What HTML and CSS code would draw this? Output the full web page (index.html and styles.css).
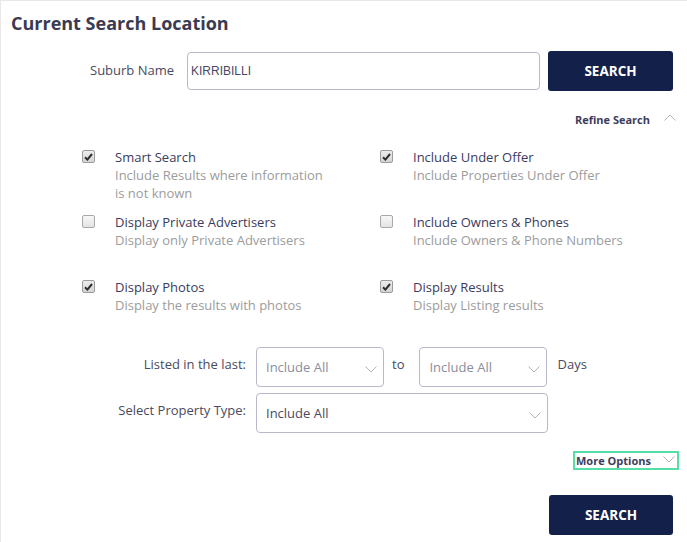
FILE: index.html
```html
<!DOCTYPE html>
<html>
<head>
<meta charset="utf-8">
<link rel="stylesheet" href="styles.css">
</head>
<body>
<div class="card">
  <h1 class="title">Current Search Location</h1>

  <div class="suburb-row">
    <label class="suburb-label">Suburb Name</label>
    <div class="suburb-input">KIRRIBILLI</div>
    <button class="btn">SEARCH</button>
  </div>

  <div class="toggle-row refine">
    <span class="toggle-text">Refine Search</span>
    <svg class="chev" width="12" height="7" viewBox="0 0 12 7"><path d="M0.5 6.5 L6 1 L11.5 6.5" fill="none" stroke="#b3b3b3" stroke-width="1"/></svg>
  </div>

  <div class="options">
    <div class="opt">
      <span class="cb checked"><svg width="9" height="8" viewBox="0 0 9 8"><path d="M1 4.2 L3.4 6.6 L8 1" fill="none" stroke="#2e2e2e" stroke-width="2"/></svg></span>
      <div class="opt-text"><div class="opt-title">Smart Search</div><div class="opt-desc">Include Results where information is not known</div></div>
    </div>
    <div class="opt">
      <span class="cb checked"><svg width="9" height="8" viewBox="0 0 9 8"><path d="M1 4.2 L3.4 6.6 L8 1" fill="none" stroke="#2e2e2e" stroke-width="2"/></svg></span>
      <div class="opt-text"><div class="opt-title">Include Under Offer</div><div class="opt-desc">Include Properties Under Offer</div></div>
    </div>
    <div class="opt">
      <span class="cb"></span>
      <div class="opt-text"><div class="opt-title">Display Private Advertisers</div><div class="opt-desc">Display only Private Advertisers</div></div>
    </div>
    <div class="opt">
      <span class="cb"></span>
      <div class="opt-text"><div class="opt-title">Include Owners &amp; Phones</div><div class="opt-desc">Include Owners &amp; Phone Numbers</div></div>
    </div>
    <div class="opt">
      <span class="cb checked"><svg width="9" height="8" viewBox="0 0 9 8"><path d="M1 4.2 L3.4 6.6 L8 1" fill="none" stroke="#2e2e2e" stroke-width="2"/></svg></span>
      <div class="opt-text"><div class="opt-title">Display Photos</div><div class="opt-desc">Display the results with photos</div></div>
    </div>
    <div class="opt">
      <span class="cb checked"><svg width="9" height="8" viewBox="0 0 9 8"><path d="M1 4.2 L3.4 6.6 L8 1" fill="none" stroke="#2e2e2e" stroke-width="2"/></svg></span>
      <div class="opt-text"><div class="opt-title">Display Results</div><div class="opt-desc">Display Listing results</div></div>
    </div>
  </div>

  <div class="filters">
    <div class="filter-row">
      <label class="filter-label">Listed in the last:</label>
      <div class="select small"><span>Include All</span><svg width="12" height="7" viewBox="0 0 12 7"><path d="M0.5 0.5 L6 6 L11.5 0.5" fill="none" stroke="#b3b3b3" stroke-width="1"/></svg></div>
      <span class="inline-text to">to</span>
      <div class="select small"><span>Include All</span><svg width="12" height="7" viewBox="0 0 12 7"><path d="M0.5 0.5 L6 6 L11.5 0.5" fill="none" stroke="#b3b3b3" stroke-width="1"/></svg></div>
      <span class="inline-text days">Days</span>
    </div>
    <div class="filter-row">
      <label class="filter-label">Select Property Type:</label>
      <div class="select wide"><span class="dark">Include All</span><svg width="12" height="7" viewBox="0 0 12 7"><path d="M0.5 0.5 L6 6 L11.5 0.5" fill="none" stroke="#b3b3b3" stroke-width="1"/></svg></div>
    </div>
  </div>

  <div class="more-wrap">
    <div class="more">
      <span class="toggle-text">More Options</span>
      <svg class="chev" width="12" height="7" viewBox="0 0 12 7"><path d="M0.5 0.5 L6 6 L11.5 0.5" fill="none" stroke="#b3b3b3" stroke-width="1"/></svg>
    </div>
  </div>

  <div class="bottom-row">
    <button class="btn">SEARCH</button>
  </div>
</div>
</body>
</html>
```

FILE: styles.css
```css
html, body {
  margin: 0;
  padding: 0;
  background: #ffffff;
}
body {
  font-family: "Open Sans", sans-serif;
  color: #3d3d5c;
  width: 687px;
  height: 542px;
  overflow: hidden;
}
.card {
  box-sizing: border-box;
  border-top: 1px solid #e8e8e8;
  border-left: 1px solid #e8e8e8;
  padding: 10px 0 0 10px;
  height: 542px;
  overflow: hidden;
}
.title {
  margin: 0;
  font-size: 18px;
  line-height: 24px;
  font-weight: 700;
  color: #3a3a52;
}
.suburb-row {
  display: flex;
  align-items: center;
  margin-top: 16px;
  padding-left: 79px;
}
.suburb-label {
  font-size: 13px;
  line-height: 18px;
  color: #4a4a5e;
  width: 97px;
  margin-top: -3px;
}
.suburb-input {
  box-sizing: border-box;
  width: 353px;
  height: 38px;
  border: 1px solid #b9b9c9;
  border-radius: 4px;
  padding-left: 3px;
  display: flex;
  align-items: center;
  font-family: "Liberation Sans", Arial, sans-serif;
  font-size: 12px;
  color: #4a4a66;
}
.btn {
  box-sizing: border-box;
  width: 125px;
  height: 40px;
  margin-left: 8px;
  border: none;
  border-radius: 3px;
  background: #13214a;
  color: #ffffff;
  font-family: "Open Sans", sans-serif;
  font-weight: 700;
  font-size: 13.5px;
  padding: 0;
}
.toggle-row {
  display: flex;
  justify-content: flex-end;
  align-items: center;
  height: 16px;
}
.refine {
  margin-top: 21px;
  padding-right: 11px;
}
.toggle-text {
  font-size: 11px;
  font-weight: 700;
  color: #3d3d5c;
  line-height: 16px;
}
.chev {
  display: block;
  margin-left: 14px;
}
.refine .chev {
  margin-top: -6px;
}
.options {
  display: grid;
  grid-template-columns: 298px 298px;
  grid-template-rows: 65px 65px auto;
  margin-top: 20px;
  padding-left: 71px;
}
.opt {
  display: flex;
  align-items: flex-start;
}
.cb {
  box-sizing: border-box;
  width: 13px;
  height: 13px;
  margin-top: 2px;
  border: 1px solid #a9a9a9;
  border-radius: 2px;
  background: linear-gradient(#f8f8f8, #e3e3e3);
  display: flex;
  align-items: center;
  justify-content: center;
  flex-shrink: 0;
}
.cb.checked {
  background: linear-gradient(#ececec, #d4d4d4);
  border-color: #9c9c9c;
}
.cb svg {
  display: block;
}
.opt-text {
  margin-left: 20px;
  width: 216px;
  font-size: 13px;
  line-height: 18px;
}
.opt-title {
  color: #3b3b5e;
}
.opt-desc {
  color: #9c9c9c;
}
.filters {
  margin-top: 33px;
  display: flex;
  flex-direction: column;
  gap: 6px;
}
.filter-row {
  display: flex;
  align-items: flex-start;
}
.filter-label {
  width: 235px;
  text-align: right;
  font-size: 13px;
  line-height: 18px;
  padding-top: 8px;
  color: #4a4a5e;
  margin-right: 10px;
}
.select {
  box-sizing: border-box;
  height: 40px;
  border: 1px solid #b9b9c9;
  border-radius: 4px;
  display: flex;
  align-items: center;
  justify-content: space-between;
  padding: 0 6px 0 9px;
  font-size: 13px;
  color: #8a8e9e;
}
.select svg {
  display: block;
  margin-top: 4px;
}
.select .dark {
  color: #4a4a5e;
}
.select.small {
  width: 128px;
}
.select.wide {
  width: 292px;
}
.inline-text {
  font-size: 13px;
  line-height: 18px;
  padding-top: 8px;
  color: #4a4a5e;
}
.to {
  margin: 0 15px 0 8px;
}
.days {
  margin-left: 10px;
}
.more-wrap {
  display: flex;
  justify-content: flex-end;
  margin-top: 18px;
  padding-right: 8px;
}
.more {
  box-sizing: border-box;
  width: 106px;
  height: 19px;
  border: 2px solid #55dfa6;
  display: flex;
  align-items: center;
  padding-left: 1px;
}
.more .chev {
  margin-left: 12px;
  margin-top: -2px;
}
.bottom-row {
  display: flex;
  justify-content: flex-end;
  margin-top: 25px;
  padding-right: 14px;
}
.bottom-row .btn {
  width: 124px;
}
```
